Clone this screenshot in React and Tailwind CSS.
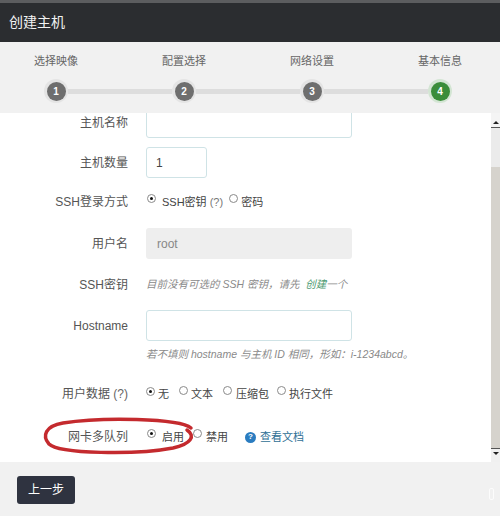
import React from "react";

function Radio({ checked }) {
  return (
    <span className="relative inline-block w-[9px] h-[9px] shrink-0 rounded-full border border-[#8a8a8a] bg-white -translate-y-[3px]">
      {checked && (
        <span className="absolute left-[2px] top-[2px] w-[3px] h-[3px] rounded-full bg-[#111]" />
      )}
    </span>
  );
}

function Step({ n, active }) {
  return (
    <div
      className={
        "w-[24px] h-[24px] shrink-0 rounded-full flex items-center justify-center " +
        (active ? "bg-[#d3e5d3]" : "bg-[#e4e4e4]")
      }
    >
      <div
        className={
          "w-[19px] h-[19px] rounded-full flex items-center justify-center text-[10px] font-bold text-white " +
          (active ? "bg-[#3a8d3a]" : "bg-[#6e6e6e]")
        }
      >
        {n}
      </div>
    </div>
  );
}

function Label({ children }) {
  return (
    <div className="w-[128px] shrink-0 text-right text-[12px] text-[#555]">{children}</div>
  );
}

export default function App() {
  return (
    <div className="w-[500px] h-[516px] overflow-hidden bg-white font-['Liberation_Sans','Noto_Sans_CJK_SC',sans-serif] flex flex-col">
      {/* top strip */}
      <div className="h-[3px] bg-[#5c5d5f] shrink-0" />
      {/* header */}
      <div className="h-[39px] shrink-0 bg-[#2b2d30] flex items-center pl-[9px]">
        <span className="text-[#f2f2f2] text-[14px]">创建主机</span>
      </div>
      {/* steps */}
      <div className="h-[71px] shrink-0 bg-[#f1f1f1] flex flex-col">
        <div className="flex gap-[16px] pt-[10px]">
          {["选择映像", "配置选择", "网络设置", "基本信息"].map((t) => (
            <div key={t} className="w-[112px] text-center text-[11px] text-[#666] leading-[18px]">
              {t}
            </div>
          ))}
        </div>
        <div className="flex items-center pl-[44px] mt-[9px]">
          <Step n={1} />
          <div className="w-[104px] h-[5px] bg-[#dddddd]" />
          <Step n={2} />
          <div className="w-[104px] h-[5px] bg-[#dddddd]" />
          <Step n={3} />
          <div className="w-[104px] h-[5px] bg-[#dddddd]" />
          <Step n={4} active />
        </div>
      </div>
      {/* content */}
      <div className="relative h-[349px] shrink-0 flex overflow-hidden">
        <div className="flex-1 flex flex-col -mt-[6px]">
          {/* 主机名称 */}
          <div className="flex items-center h-[31px]">
            <Label>主机名称</Label>
            <div className="ml-[18px] w-[206px] h-[31px] rounded-[3px] border border-[#cfe3e6] bg-white" />
          </div>
          {/* 主机数量 */}
          <div className="flex items-center h-[31px] mt-[9px]">
            <Label>主机数量</Label>
            <div className="ml-[18px] w-[61px] h-[31px] rounded-[3px] border border-[#cfe3e6] bg-white flex items-center pl-[9px] text-[12px] text-[#444]">
              1
            </div>
          </div>
          {/* SSH登录方式 */}
          <div className="flex items-center h-[30px] mt-[9px]">
            <Label>SSH登录方式</Label>
            <div className="ml-[18px] flex items-center text-[11px] text-[#444]">
              <span className="ml-[1px]"><Radio checked /></span>
              <span className="ml-[6px]">SSH密钥 <span className="text-[#777]">(?)</span></span>
              <span className="ml-[6px]"><Radio /></span>
              <span className="ml-[3px]">密码</span>
            </div>
          </div>
          {/* 用户名 */}
          <div className="flex items-center h-[31px] mt-[11px]">
            <Label>用户名</Label>
            <div className="ml-[18px] w-[206px] h-[31px] rounded-[3px] bg-[#eeeeee] flex items-center pl-[11px] text-[12px] text-[#888]">
              root
            </div>
          </div>
          {/* SSH密钥 */}
          <div className="flex items-center h-[30px] mt-[11px]">
            <Label>SSH密钥</Label>
            <div className="ml-[18px] text-[10.5px] italic text-[#8a8a8a]">
              目前没有可选的 SSH 密钥，请先 <span className="text-[#4d9a72] ml-[3px]">创建</span>一个
            </div>
          </div>
          {/* Hostname */}
          <div className="flex items-center h-[31px] mt-[10px]">
            <Label>Hostname</Label>
            <div className="ml-[18px] w-[206px] h-[31px] rounded-[3px] border border-[#cfe3e6] bg-white" />
          </div>
          {/* hint */}
          <div className="flex items-center h-[18px] mt-[5px]">
            <div className="w-[128px] shrink-0" />
            <div className="ml-[18px] text-[10.5px] italic text-[#8a8a8a]">
              若不填则 hostname 与主机 ID 相同，形如：i-1234abcd。
            </div>
          </div>
          {/* 用户数据 */}
          <div className="flex items-center h-[30px] mt-[15px]">
            <Label>
              用户数据 <span className="text-[#666]">(?)</span>
            </Label>
            <div className="ml-[18px] flex items-center text-[11px] text-[#444]">
              <Radio checked />
              <span className="ml-[3px]">无</span>
              <span className="ml-[10px]"><Radio /></span>
              <span className="ml-[3px]">文本</span>
              <span className="ml-[10px]"><Radio /></span>
              <span className="ml-[4px]">压缩包</span>
              <span className="ml-[8px]"><Radio /></span>
              <span className="ml-[3px]">执行文件</span>
            </div>
          </div>
          {/* 网卡多队列 */}
          <div className="flex items-center h-[30px] mt-[13px]">
            <Label>网卡多队列</Label>
            <div className="ml-[18px] flex items-center text-[11px] text-[#444]">
              <span className="ml-[1px]"><Radio checked /></span>
              <span className="ml-[6px]">启用</span>
              <span className="ml-[9px]"><Radio /></span>
              <span className="ml-[4px]">禁用</span>
              <span className="ml-[17px] w-[11px] h-[11px] rounded-full bg-[#2a7cc0] text-white text-[8px] font-bold flex items-center justify-center leading-none">
                ?
              </span>
              <span className="ml-[4px] text-[#2f6f95]">查看文档</span>
            </div>
          </div>
        </div>
        {/* scrollbar */}
        <div className="w-[9px] shrink-0 flex flex-col bg-[#d6d3cd]">
          <div className="h-[15px] bg-[#f4f4f4] flex items-end justify-center pb-[3px] border-b border-[#555]">
            <div className="w-0 h-0 border-l-[3px] border-r-[3px] border-b-[3px] border-l-transparent border-r-transparent border-b-[#222]" />
          </div>
          <div className="h-[39px] bg-[#ebebeb]" />
          <div className="flex-1" />
          <div className="h-[14px] bg-[#f0f0f0] border-t border-[#555] flex items-start justify-center pt-[3px]">
            <div className="w-0 h-0 border-l-[3px] border-r-[3px] border-t-[3px] border-l-transparent border-r-transparent border-t-[#222]" />
          </div>
        </div>
        {/* red hand-drawn ellipse */}
        <svg
          className="absolute left-[41px] top-[303px] pointer-events-none"
          width="158"
          height="40"
          viewBox="0 0 158 40"
        >
          <path
            d="M150 12 C 138 2, 60 1, 22 7 C 4 10, 1 20, 8 28 C 18 38, 95 39, 132 32 C 150 28, 155 20, 146 14"
            fill="none"
            stroke="#c42a2e"
            strokeWidth="3.5"
            strokeLinecap="round"
          />
        </svg>
      </div>
      {/* footer */}
      <div className="flex-1 bg-[#f1f1f1] flex items-start pl-[17px] pt-[14px] relative">
        <div className="w-[58px] h-[28px] rounded-[3px] bg-[#2f3340] flex items-center justify-center text-white text-[12px]">
          上一步
        </div>
        <div className="absolute right-[6px] top-[26px] w-[5px] h-[12px] rounded-[2px] border border-white opacity-80" />
      </div>
    </div>
  );
}
